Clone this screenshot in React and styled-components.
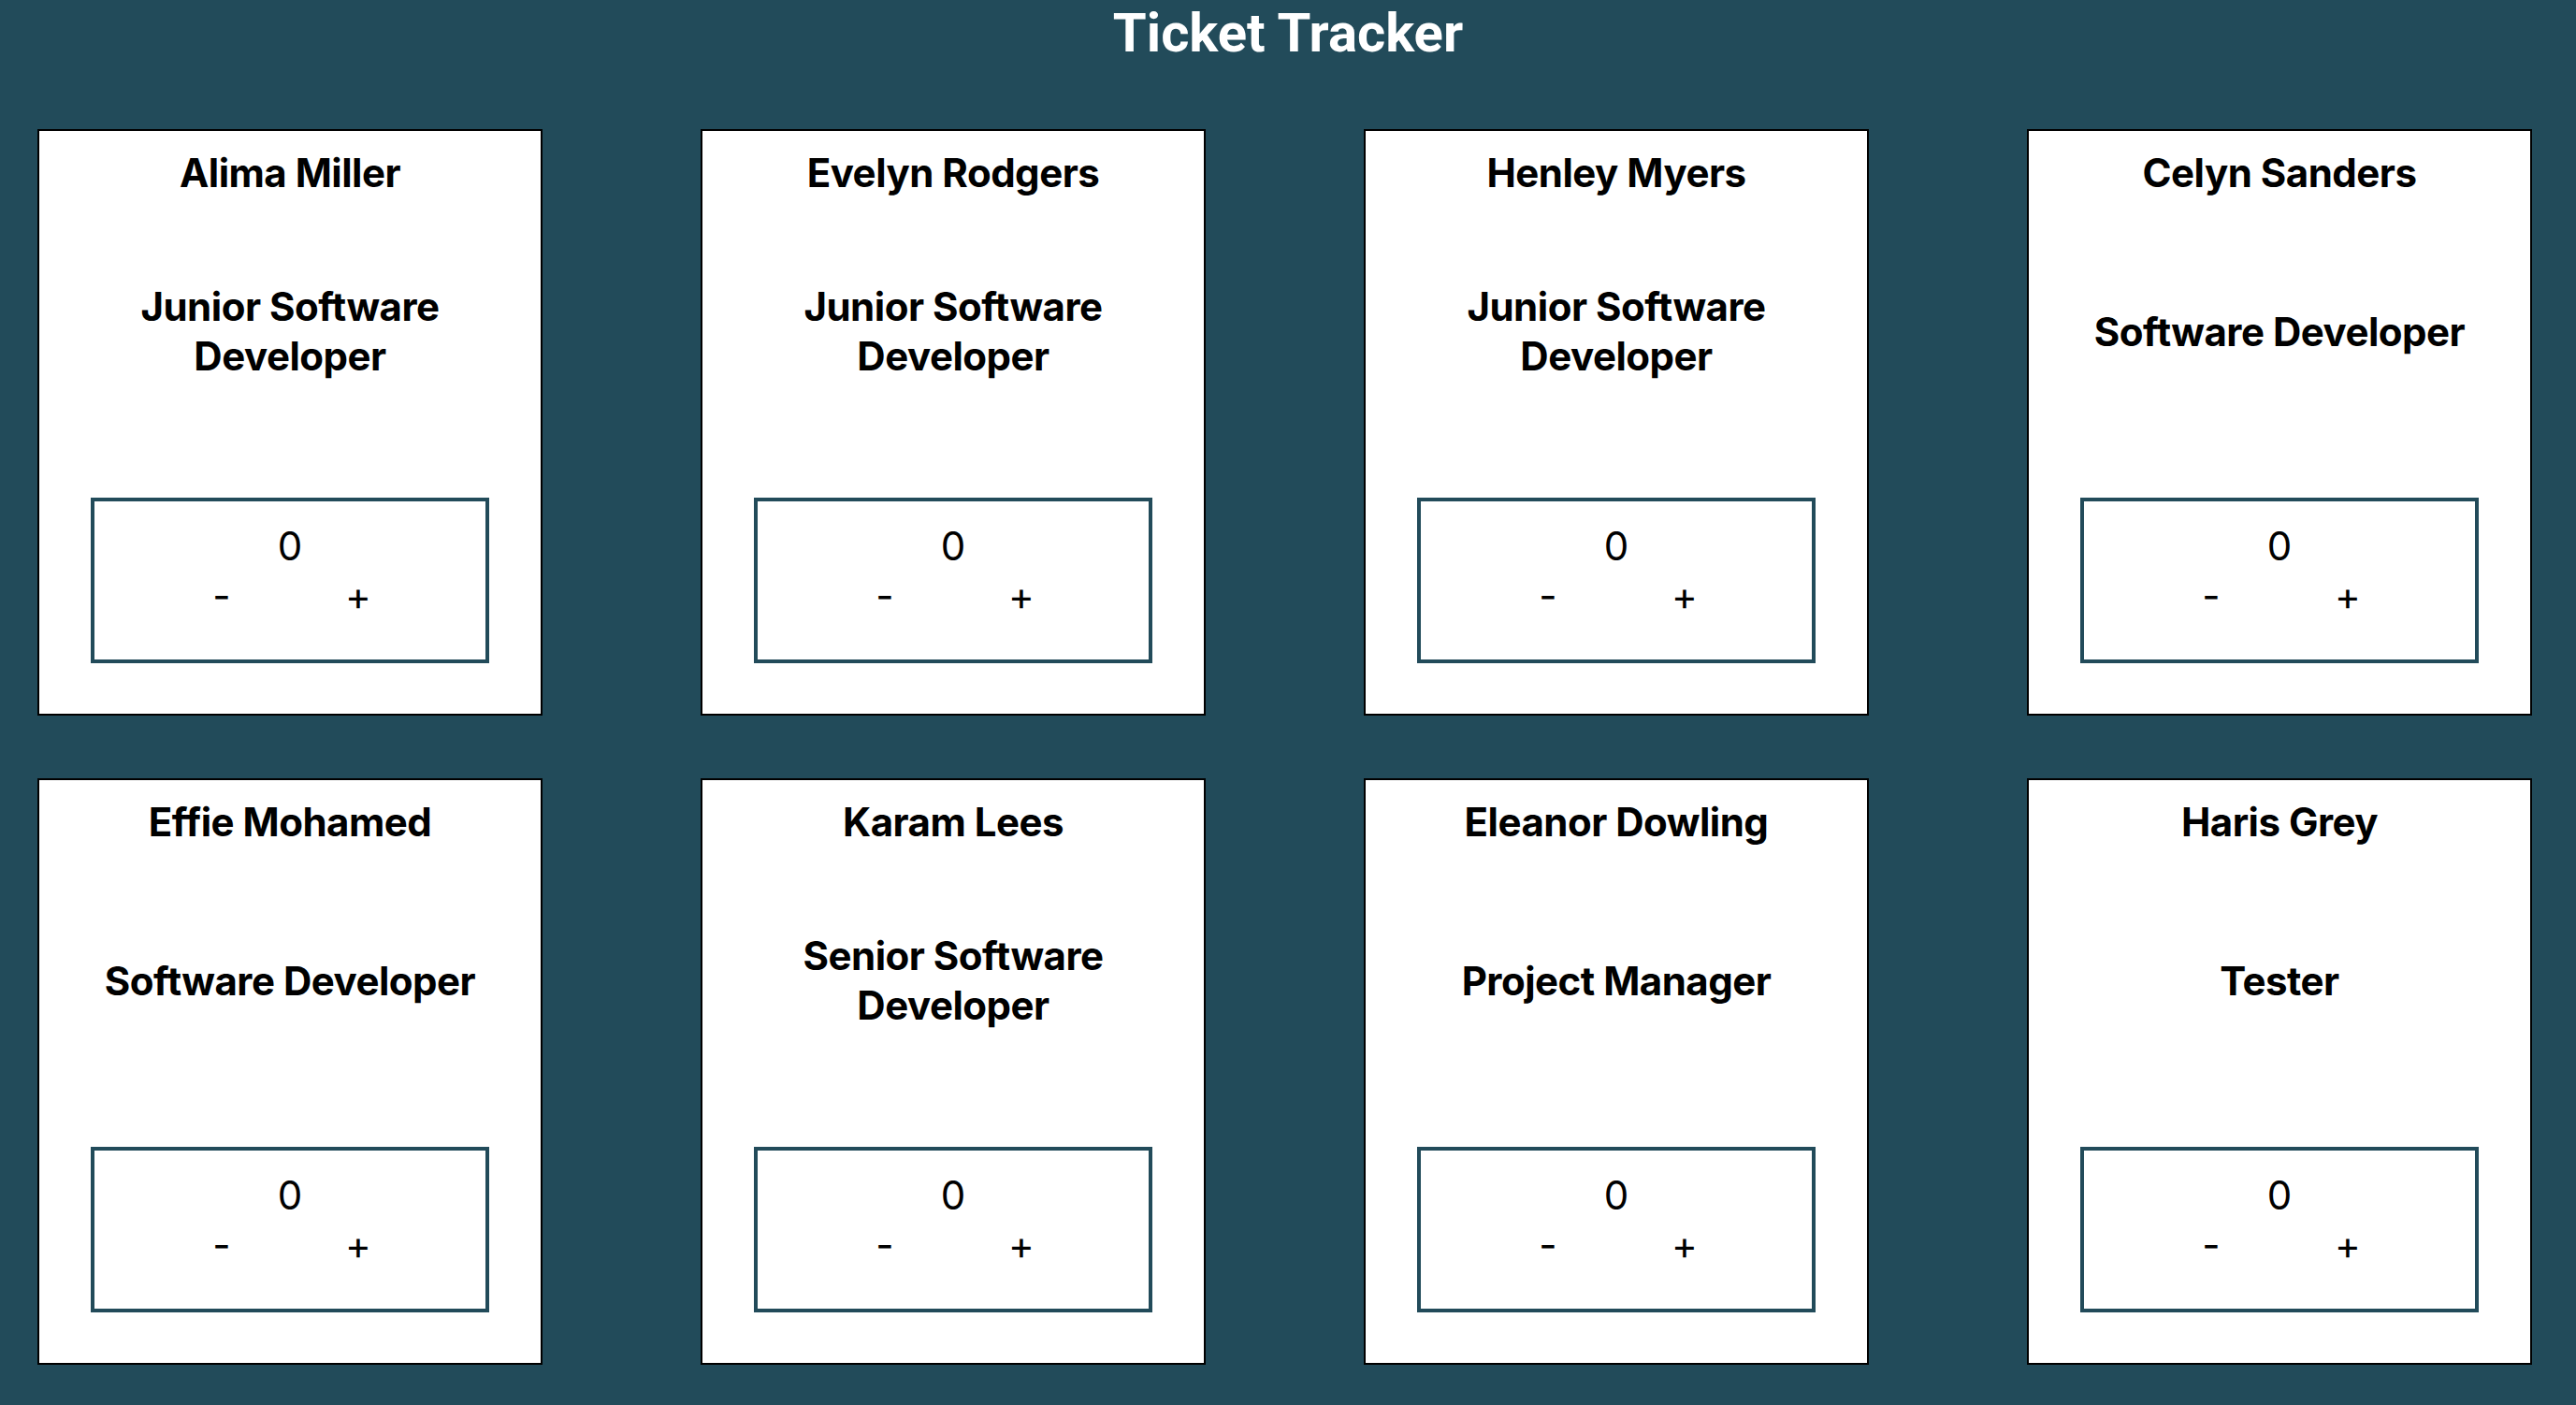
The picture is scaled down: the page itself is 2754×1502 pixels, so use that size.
import React, { useState } from 'react'
import styled, { createGlobalStyle } from 'styled-components'

const GlobalStyle = createGlobalStyle`
	html, body {
		margin: 0;
		padding: 0;
		background: #224b5a;
	}
	body {
		font-family: Inter, 'Noto Sans', 'Liberation Sans', sans-serif;
		color: #000;
	}
`

const Page = styled.div`
	min-height: 1502px;
	background: #224b5a;
	box-sizing: border-box;
`

const Title = styled.h1`
	margin: 0;
	height: 66px;
	line-height: 70px;
	text-align: center;
	font-family: Roboto, 'Liberation Sans', sans-serif;
	font-weight: 700;
	font-size: 58px;
	color: #fff;
`

const Grid = styled.div`
	display: grid;
	grid-template-columns: repeat(4, 540px);
	justify-content: space-between;
	row-gap: 67px;
	padding: 72px 47px 0 40px;
`

const Card = styled.div`
	box-sizing: border-box;
	height: 627px;
	background: #fff;
	border: 2px solid #000;
	display: flex;
	flex-direction: column;
	align-items: center;
`

const Name = styled.h2`
	margin: 0;
	height: 88px;
	display: flex;
	align-items: center;
	justify-content: center;
	font-size: 42px;
	font-weight: 700;
	letter-spacing: -0.5px;
	text-align: center;
`

const Role = styled.h2`
	margin: 0;
	height: 252px;
	padding: 0 30px;
	display: flex;
	align-items: center;
	justify-content: center;
	font-size: 42px;
	line-height: 53px;
	font-weight: 700;
	letter-spacing: -0.5px;
	text-align: center;
`

const Counter = styled.div`
	box-sizing: border-box;
	margin-top: 52px;
	width: 426px;
	height: 177px;
	border: 4px solid #224b5a;
	display: flex;
	flex-direction: column;
	align-items: center;
	padding-top: 23px;
`

const Count = styled.div`
	font-size: 42px;
	line-height: 50px;
	height: 50px;
`

const Buttons = styled.div`
	display: flex;
	gap: 86px;
	margin-top: 3px;
`

const Btn = styled.button`
	width: 60px;
	height: 50px;
	padding: 0;
	border: none;
	background: none;
	font-family: Inter, 'Liberation Sans', sans-serif;
	font-size: 42px;
	line-height: 50px;
	color: #000;
	cursor: pointer;
`

const people = [
	{ name: 'Alima Miller', role: 'Junior Software Developer' },
	{ name: 'Evelyn Rodgers', role: 'Junior Software Developer' },
	{ name: 'Henley Myers', role: 'Junior Software Developer' },
	{ name: 'Celyn Sanders', role: 'Software Developer' },
	{ name: 'Effie Mohamed', role: 'Software Developer' },
	{ name: 'Karam Lees', role: 'Senior Software Developer' },
	{ name: 'Eleanor Dowling', role: 'Project Manager' },
	{ name: 'Haris Grey', role: 'Tester' },
]

const Person = ({ name, role }) => {
	const [tickets, setTickets] = useState(0)

	return (
		<Card>
			<Name>{name}</Name>
			<Role>{role}</Role>
			<Counter>
				<Count>{tickets}</Count>
				<Buttons>
					<Btn onClick={() => setTickets(tickets - 1)}>-</Btn>
					<Btn onClick={() => setTickets(tickets + 1)}>+</Btn>
				</Buttons>
			</Counter>
		</Card>
	)
}

const App = () => {
	return (
		<>
			<GlobalStyle />
			<Page>
				<Title>Ticket Tracker</Title>
				<Grid>
					{people.map((p, index) => {
						return <Person {...p} key={index} />
					})}
				</Grid>
			</Page>
		</>
	)
}

export default App
